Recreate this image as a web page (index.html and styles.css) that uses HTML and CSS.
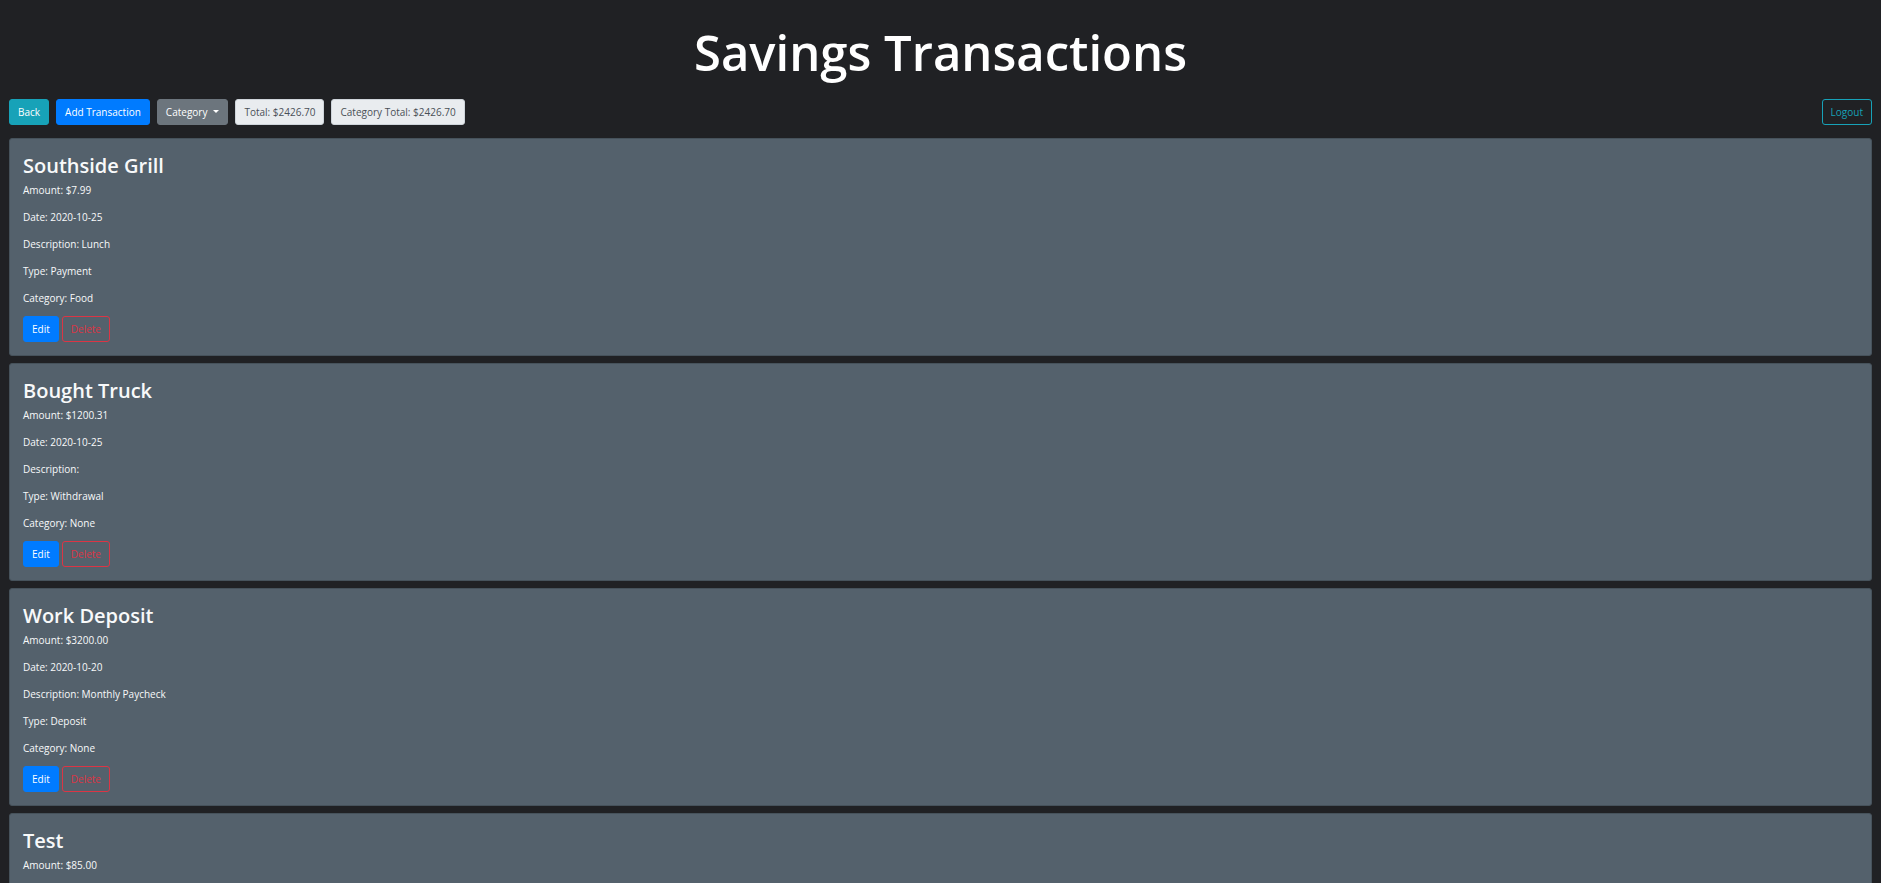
FILE: index.html
```html
<!DOCTYPE html>
<html lang="en">
<head>
<meta charset="utf-8">
<title>Savings Transactions</title>
<link rel="stylesheet" href="styles.css">
</head>
<body>
<h1 class="page-title">Savings Transactions</h1>
<nav class="toolbar">
  <a class="btn btn-info" href="#">Back</a>
  <a class="btn btn-primary" href="#">Add Transaction</a>
  <button class="btn btn-secondary dropdown" type="button">Category</button>
  <span class="btn total">Total: $2426.70</span>
  <span class="btn total">Category Total: $2426.70</span>
  <a class="btn btn-outline-info logout" href="#">Logout</a>
</nav>
<main class="list">
  <article class="card">
    <h2 class="card-title">Southside Grill</h2>
    <div class="details">
      <p>Amount: $7.99</p>
      <p>Date: 2020-10-25</p>
      <p>Description: Lunch</p>
      <p>Type: Payment</p>
      <p>Category: Food</p>
    </div>
    <div class="actions"><a class="btn btn-primary" href="#">Edit</a><button class="btn btn-outline-danger" type="button">Delete</button></div>
  </article>
  <article class="card">
    <h2 class="card-title">Bought Truck</h2>
    <div class="details">
      <p>Amount: $1200.31</p>
      <p>Date: 2020-10-25</p>
      <p>Description:</p>
      <p>Type: Withdrawal</p>
      <p>Category: None</p>
    </div>
    <div class="actions"><a class="btn btn-primary" href="#">Edit</a><button class="btn btn-outline-danger" type="button">Delete</button></div>
  </article>
  <article class="card">
    <h2 class="card-title">Work Deposit</h2>
    <div class="details">
      <p>Amount: $3200.00</p>
      <p>Date: 2020-10-20</p>
      <p>Description: Monthly Paycheck</p>
      <p>Type: Deposit</p>
      <p>Category: None</p>
    </div>
    <div class="actions"><a class="btn btn-primary" href="#">Edit</a><button class="btn btn-outline-danger" type="button">Delete</button></div>
  </article>
  <article class="card">
    <h2 class="card-title">Test</h2>
    <div class="details">
      <p>Amount: $85.00</p>
    </div>
  </article>
</main>
</body>
</html>
```

FILE: styles.css
```css
* { box-sizing: border-box; }
html, body { height: 100%; }
body {
  margin: 0;
  padding: 20px 9px 0;
  display: flex;
  flex-direction: column;
  overflow: hidden;
  background: #202124;
  color: #f8f9fa;
  font-family: "Segoe UI", "Open Sans", "Noto Sans", sans-serif;
  font-size: 10px;
  line-height: 16px;
}
.page-title {
  margin: 0 0 15px;
  color: #fff;
  font-size: 49px;
  font-weight: 600;
  line-height: 64px;
  text-align: center;
}
.toolbar {
  display: flex;
  gap: 7px;
  margin-bottom: 13px;
}
.btn {
  display: inline-block;
  padding: 4px 8px;
  border: 1px solid transparent;
  border-radius: 3px;
  background: none;
  color: #fff;
  font: inherit;
  text-decoration: none;
  white-space: nowrap;
}
.btn-info { background: #17a2b8; border-color: #17a2b8; }
.btn-primary { background: #007bff; border-color: #007bff; }
.btn-secondary { background: #6c757d; border-color: #6c757d; }
.btn-outline-info { border-color: #17a2b8; color: #17a2b8; }
.btn-outline-danger { border-color: #dc3545; color: #dc3545; }
.total { background: #e9ecef; border-color: #ced4da; color: #495057; }
.logout { margin-left: auto; }
.dropdown::after {
  content: "";
  display: inline-block;
  margin-left: 6px;
  vertical-align: 3px;
  border: 3px solid transparent;
  border-top-color: currentColor;
  border-bottom: 0;
}
.list {
  display: flex;
  flex-direction: column;
  gap: 7px;
}
.card {
  flex: none;
  padding: 13px;
  border: 1px solid #46525b;
  border-radius: 3px;
  background: #54616c;
}
.card:last-child { padding-bottom: 30px; }
.card-title {
  margin: 0 0 2px;
  font-size: 20px;
  font-weight: 600;
  line-height: 28px;
}
.details {
  display: flex;
  flex-direction: column;
  gap: 11px;
  margin-bottom: 10px;
}
.details p { margin: 0; }
.actions { display: flex; gap: 3px; }
```
